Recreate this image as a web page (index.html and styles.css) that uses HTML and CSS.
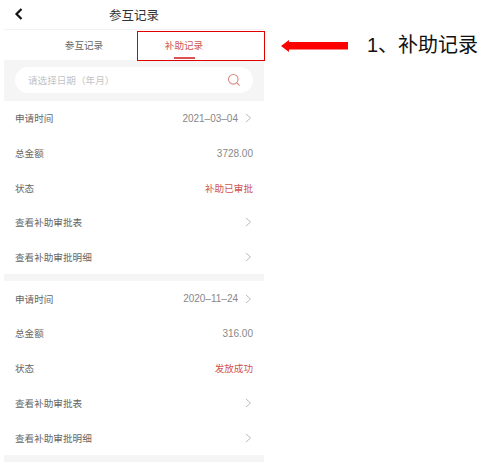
FILE: index.html
```html
<!DOCTYPE html>
<html lang="zh-CN">
<head>
    <meta charset="UTF-8">
    <meta name="viewport" content="width=device-width, initial-scale=1.0">
    <title>参互记录</title>
    <link rel="stylesheet" href="styles.css">
</head>
<body>
    <div class="screen">
        <!-- Header -->
        <div class="header">
            <svg class="back" width="10" height="14" viewBox="0 0 10 14"><path d="M7.5 2 L2.5 7 L7.5 12" fill="none" stroke="#111" stroke-width="2.2"/></svg>
            <span class="header-title">参互记录</span>
        </div>

        <!-- Tabs -->
        <div class="tabs">
            <div class="tab">参互记录</div>
            <div class="tab tab-active">补助记录</div>
        </div>

        <!-- Search -->
        <div class="search-band">
            <div class="search">
                <span>请选择日期（年月）</span>
                <svg width="14" height="14" viewBox="0 0 14 14"><circle cx="6.3" cy="6.3" r="4.8" fill="none" stroke="#d98a84" stroke-width="1.1"/><path d="M10 10 L12.6 12.6" stroke="#d98a84" stroke-width="1.1"/></svg>
            </div>
        </div>

        <div class="record">
            <div class="row"><span>申请时间</span><span class="value">2021–03–04<svg class="chevron" width="7" height="10" viewBox="0 0 7 10"><path d="M1 1 L5.5 5 L1 9" fill="none" stroke="#bbb"/></svg></span></div>
            <div class="row"><span>总金额</span><span class="value">3728.00</span></div>
            <div class="row"><span>状态</span><span class="value status">补助已审批</span></div>
            <div class="row"><span>查看补助审批表</span><svg class="chevron" width="7" height="10" viewBox="0 0 7 10"><path d="M1 1 L5.5 5 L1 9" fill="none" stroke="#bbb"/></svg></div>
            <div class="row"><span>查看补助审批明细</span><svg class="chevron" width="7" height="10" viewBox="0 0 7 10"><path d="M1 1 L5.5 5 L1 9" fill="none" stroke="#bbb"/></svg></div>
        </div>

        <div class="record">
            <div class="row"><span>申请时间</span><span class="value">2020–11–24<svg class="chevron" width="7" height="10" viewBox="0 0 7 10"><path d="M1 1 L5.5 5 L1 9" fill="none" stroke="#bbb"/></svg></span></div>
            <div class="row"><span>总金额</span><span class="value">316.00</span></div>
            <div class="row"><span>状态</span><span class="value status">发放成功</span></div>
            <div class="row"><span>查看补助审批表</span><svg class="chevron" width="7" height="10" viewBox="0 0 7 10"><path d="M1 1 L5.5 5 L1 9" fill="none" stroke="#bbb"/></svg></div>
            <div class="row"><span>查看补助审批明细</span><svg class="chevron" width="7" height="10" viewBox="0 0 7 10"><path d="M1 1 L5.5 5 L1 9" fill="none" stroke="#bbb"/></svg></div>
        </div>
    </div>

    <!-- Annotation over the screenshot -->
    <div class="mark-box"></div>
    <svg class="mark-arrow" width="67" height="14" viewBox="0 0 67 14"><path d="M0 7 L8 1 L8 3 L67 3 L67 10.5 L8 10.5 L8 13 Z" fill="#f00"/></svg>
    <div class="mark-label">1、补助记录</div>
</body>
</html>
```

FILE: styles.css
```css
/* Page */
body {
    margin: 0;
    padding: 0;
    background-color: white;
    font-family: "Liberation Sans", "Noto Sans CJK SC", sans-serif;
    overflow: hidden;
}

.screen {
    width: 260px;
    margin-left: 4px;
    color: #666;
    font-size: 9.6px;
}

/* Header */
.header {
    position: relative;
    height: 29px;
    display: flex;
    align-items: center;
    justify-content: center;
    border-bottom: 1px solid #f2f2f2;
}

.back {
    position: absolute;
    left: 10px;
    top: 7px;
}

.header-title {
    font-size: 12.5px;
    color: #333;
}

/* Tabs */
.tabs {
    height: 30px;
    display: flex;
    padding: 0 30px;
}

.tab {
    flex: 1;
    display: flex;
    align-items: center;
    justify-content: center;
    position: relative;
    padding-bottom: 1px;
    box-sizing: border-box;
}

.tab-active {
    color: #cf5450;
}

.tab-active::after {
    content: "";
    position: absolute;
    left: 50%;
    bottom: 1px;
    width: 21px;
    height: 2px;
    margin-left: -10px;
    background-color: #d9534f;
}

/* Search */
.search-band {
    background-color: #f5f5f5;
    padding: 7px 11px 8px;
}

.search {
    height: 26px;
    background-color: white;
    border-radius: 13px;
    display: flex;
    align-items: center;
    justify-content: space-between;
    padding: 0 12px 0 13px;
    color: #c4c4c4;
}

/* Records */
.record {
    border-bottom: 7px solid #f5f5f5;
    padding-top: 0;
}

.row {
    height: 34.7px;
    display: flex;
    align-items: center;
    justify-content: space-between;
    padding: 0 11px;
}

.value {
    display: flex;
    align-items: center;
    color: #888;
    font-size: 10px;
}

.status {
    color: #cf5450;
    font-size: 9.6px;
}

.chevron {
    margin-left: 7px;
    margin-right: 1px;
}

/* Annotation */
.mark-box {
    position: absolute;
    left: 137px;
    top: 31px;
    width: 126px;
    height: 28px;
    border: 1px solid #e00000;
}

.mark-arrow {
    position: absolute;
    left: 281px;
    top: 39px;
}

.mark-label {
    position: absolute;
    left: 367px;
    top: 32px;
    font-size: 20px;
    line-height: 26px;
    color: #111;
}
```
